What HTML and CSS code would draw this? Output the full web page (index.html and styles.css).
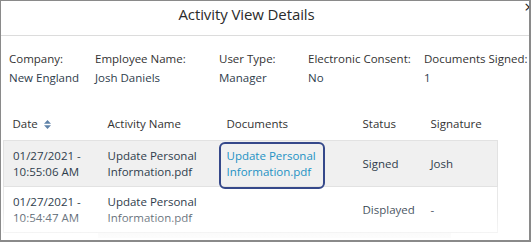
FILE: index.html
```html
<!DOCTYPE html>
<html lang="en">
<head>
    <meta charset="UTF-8">
    <meta name="viewport" content="width=device-width, initial-scale=1.0">
    <title>Activity View Details</title>
    <link rel="stylesheet" href="styles.css">
</head>
<body>
    <div class="modal">
        <div class="modal-header">
            <h1>Activity View Details</h1>
            <span class="close-btn">&times;</span>
        </div>
        <div class="summary">
            <div class="field">
                <div class="label">Company:</div>
                <div class="value">New England</div>
            </div>
            <div class="field">
                <div class="label">Employee Name:</div>
                <div class="value">Josh Daniels</div>
            </div>
            <div class="field">
                <div class="label">User Type:</div>
                <div class="value">Manager</div>
            </div>
            <div class="field">
                <div class="label">Electronic Consent:</div>
                <div class="value">No</div>
            </div>
            <div class="field">
                <div class="label">Documents Signed:</div>
                <div class="value">1</div>
            </div>
        </div>
        <div class="table-wrap">
            <table class="activity-table">
                <thead>
                    <tr>
                        <th class="col-date">Date
                            <svg class="sort-icon" width="7" height="9" viewBox="0 0 7 9">
                                <path d="M0 3.8 L3.5 0 L7 3.8 Z M0 5.2 L3.5 9 L7 5.2 Z"/>
                            </svg>
                        </th>
                        <th class="col-activity">Activity Name</th>
                        <th class="col-docs">Documents</th>
                        <th class="col-status">Status</th>
                        <th class="col-sign">Signature</th>
                    </tr>
                </thead>
                <tbody>
                    <tr class="shaded">
                        <td>01/27/2021 -<br>10:55:06 AM</td>
                        <td>Update Personal<br>Information.pdf</td>
                        <td class="doc-cell">
                            <a href="#" class="doc-link">Update Personal<br>Information.pdf</a>
                            <span class="highlight"></span>
                        </td>
                        <td>Signed</td>
                        <td>Josh</td>
                    </tr>
                    <tr>
                        <td>01/27/2021 -<br>10:54:47 AM</td>
                        <td>Update Personal<br>Information.pdf</td>
                        <td></td>
                        <td>Displayed</td>
                        <td>-</td>
                    </tr>
                </tbody>
            </table>
            <div class="scroll-track"></div>
            <div class="fade"></div>
        </div>
    </div>
</body>
</html>
```

FILE: styles.css
```css
body {
    margin: 0;
    font-family: "Open Sans", Arial, sans-serif;
    background-color: white;
}
.modal {
    position: relative;
    width: 531px;
    height: 242px;
    box-sizing: border-box;
    border-style: solid;
    border-color: #8a8a8a;
    border-width: 1px 2px 2px 1px;
    overflow: hidden;
    background-color: white;
}
.modal-header {
    height: 25px;
    border-bottom: 1px solid #dcdcdc;
    padding: 0 37px 9px 0;
    display: flex;
    align-items: center;
    justify-content: center;
}
h1 {
    margin: 0;
    font-size: 15px;
    font-weight: normal;
    color: #2b2b2b;
    letter-spacing: -0.1px;
}
.close-btn {
    position: absolute;
    top: -3px;
    right: -5px;
    font-size: 17px;
    line-height: 17px;
    color: #222;
}
.summary {
    display: grid;
    grid-template-columns: 86px 124px 89px 116px auto;
    padding: 13px 0 0 8px;
    font-size: 11.5px;
    line-height: 19px;
    color: #333;
}
.value {
    color: #2f3d4c;
}
.table-wrap {
    position: relative;
    margin: 25px 0 0 2px;
}
.activity-table {
    border-collapse: collapse;
    width: 495px;
    font-size: 11.5px;
    line-height: 16px;
    color: #2f3d4c;
}
.activity-table th {
    font-weight: normal;
    text-align: left;
    color: #333;
    padding: 4px 0 8px 9px;
    border-bottom: 1px solid #e2e2e2;
}
.activity-table td {
    padding: 7px 0 6px 9px;
    vertical-align: middle;
    border-bottom: 1px solid #e2e2e2;
}
.col-date { width: 86px; }
.col-activity { width: 110px; }
.col-docs { width: 127px; }
.col-status { width: 59px; }
.shaded td {
    background-color: #f0f0f0;
}
.shaded td:first-child {
    border-left: 1px solid #e2e2e2;
}
.shaded td:last-child {
    border-right: 1px solid #e2e2e2;
}
tbody tr:last-child td:first-child {
    border-left: 1px solid #e8e8e8;
}
tbody tr:last-child td:last-child {
    border-right: 1px solid #e8e8e8;
}
.sort-icon {
    fill: #5f82a8;
    margin-left: 3px;
    vertical-align: -1px;
}
.doc-cell {
    position: relative;
}
.doc-link {
    color: #2392c4;
    text-decoration: none;
}
.highlight {
    position: absolute;
    left: 1px;
    top: 1px;
    width: 102px;
    height: 43px;
    border: 2px solid #35488a;
    border-radius: 6px;
}
.scroll-track {
    height: 5px;
    margin-left: 95px;
    width: 353px;
    background-color: #f4f4f4;
}
.fade {
    position: absolute;
    left: 0;
    right: 0;
    bottom: 0;
    height: 32px;
    background: linear-gradient(rgba(255,255,255,0), rgba(255,255,255,0.75));
}
```
